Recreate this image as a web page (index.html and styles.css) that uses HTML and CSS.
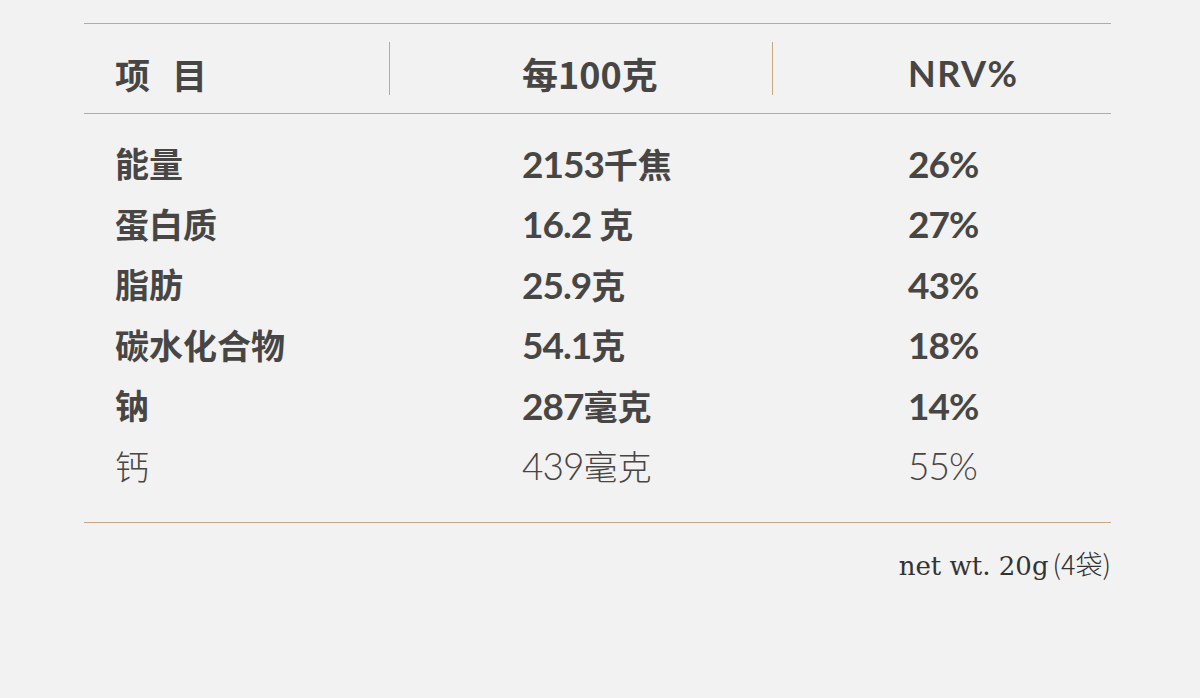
FILE: index.html
```html
<!DOCTYPE html>
<html lang="zh">
<head>
<meta charset="utf-8">
<title>营养成分表</title>
<link rel="stylesheet" href="styles.css">
</head>
<body>
<div class="wrap">
  <div class="table">
    <div class="head">
      <div class="hcell c1"><span class="spaced">项 目</span></div>
      <div class="hcell c2 sep">每100克</div>
      <div class="hcell c3 sep"><span class="latin">NRV%</span></div>
    </div>
    <div class="tbody">
      <div class="row">
        <div class="cell c1">能量</div>
        <div class="cell c2"><span class="num">2153</span>千焦</div>
        <div class="cell c3"><span class="num">26%</span></div>
      </div>
      <div class="row">
        <div class="cell c1">蛋白质</div>
        <div class="cell c2"><span class="num">16.2 </span>克</div>
        <div class="cell c3"><span class="num">27%</span></div>
      </div>
      <div class="row">
        <div class="cell c1">脂肪</div>
        <div class="cell c2"><span class="num">25.9</span>克</div>
        <div class="cell c3"><span class="num">43%</span></div>
      </div>
      <div class="row">
        <div class="cell c1">碳水化合物</div>
        <div class="cell c2"><span class="num">54.1</span>克</div>
        <div class="cell c3"><span class="num">18%</span></div>
      </div>
      <div class="row">
        <div class="cell c1">钠</div>
        <div class="cell c2"><span class="num">287</span>毫克</div>
        <div class="cell c3"><span class="num">14%</span></div>
      </div>
      <div class="row light">
        <div class="cell c1">钙</div>
        <div class="cell c2"><span class="num">439</span>毫克</div>
        <div class="cell c3"><span class="num">55%</span></div>
      </div>
    </div>
  </div>
  <p class="net">net wt. 20g<span class="net-cjk">(4袋)</span></p>
</div>
</body>
</html>
```
FILE: styles.css
```css
html, body {
  margin: 0;
  padding: 0;
  background: #f2f2f2;
}

body {
  color: #484644;
  font-family: "Noto Sans CJK SC", "Noto Sans", sans-serif;
}

.wrap {
  padding: 23px 89px 0 84px;
}

.table {
  border-top: 1px solid #c9a683;
  border-bottom: 1px solid #c9a683;
}

.head {
  display: grid;
  grid-template-columns: 305px 383px 1fr;
  align-items: center;
  height: 89px;
  border-bottom: 1px solid #c9a683;
}

.hcell {
  height: 53px;
  display: flex;
  align-items: center;
  padding-top: 9px;
  box-sizing: border-box;
  font-size: 35px;
  font-weight: 700;
  line-height: 1;
}

.spaced {
  letter-spacing: 7px;
  white-space: pre;
}

.sep {
  border-left: 1px solid #c9a683;
}

.head .c1 { padding-left: 31px; }
.head .c2 { padding-left: 132px; font-size: 36px; }
.head .c3 { padding-left: 135px; }

.latin {
  font-family: "Lato", "Noto Sans", sans-serif;
  font-weight: 700;
  font-size: 36px;
  letter-spacing: 1.5px;
}

.tbody {
  padding: 19px 0 26px;
}

.row {
  display: grid;
  grid-template-columns: 305px 383px 1fr;
  height: 60.5px;
  align-items: center;
  font-size: 34px;
  font-weight: 700;
  line-height: 1;
}

.row .c1 { padding-left: 31px; }
.row .c2 { padding-left: 133px; }
.row .c3 { padding-left: 136px; }

.num {
  font-family: "Lato", "Noto Sans", sans-serif;
  font-weight: 700;
  font-size: 37px;
  letter-spacing: -1px;
}

.row.light {
  font-weight: 300;
}

.row.light .num {
  font-weight: 300;
}

.net {
  margin: 26px 0 0;
  text-align: right;
  font-family: "DejaVu Serif", "Liberation Serif", serif;
  font-size: 26px;
  line-height: 30px;
  color: #333;
}

.net-cjk {
  font-family: "Noto Sans CJK SC", sans-serif;
  font-weight: 300;
  font-size: 27px;
  margin-left: 4px;
}
```
